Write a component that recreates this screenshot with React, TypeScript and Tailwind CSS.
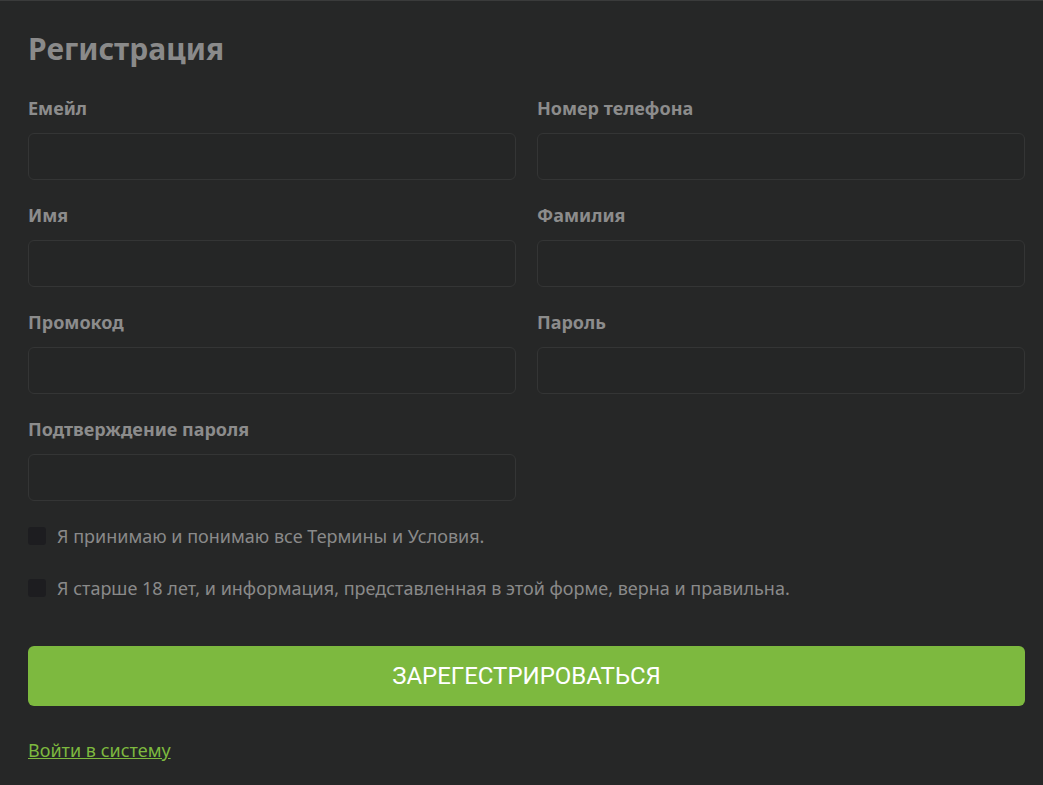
import React from "react";

function Field({ label }: { label: string }) {
  return (
    <div className="flex flex-col">
      <label className="text-[18px] font-bold leading-[22px] text-[#8c8c8c] mb-[14px]">{label}</label>
      <input className="h-[47px] w-full rounded-[6px] border border-[#343535] bg-[#252626] outline-none" />
    </div>
  );
}

function Check({ text }: { text: string }) {
  return (
    <label className="flex items-center gap-[11px]">
      <span className="w-[18px] h-[18px] rounded-[3px] bg-[#1d1d20] shrink-0" />
      <span className="text-[18px] leading-[22px] text-[#8a8a8a]">{text}</span>
    </label>
  );
}

export default function App() {
  return (
    <div className="min-h-[785px] w-full bg-[#262727] border-t border-[#3a3b3b] px-[28px] pt-[30px] pb-[24px]" style={{ fontFamily: '"Noto Sans", "Open Sans", sans-serif' }}>
      <h1 className="text-[30px] font-bold leading-[36px] text-[#8a8a8a]">Регистрация</h1>
      <div className="grid grid-cols-2 gap-x-[21px] gap-y-[24px] mt-[30px] w-[997px]">
        <Field label="Емейл" />
        <Field label="Номер телефона" />
        <Field label="Имя" />
        <Field label="Фамилия" />
        <Field label="Промокод" />
        <Field label="Пароль" />
        <Field label="Подтверждение пароля" />
      </div>
      <div className="flex flex-col gap-[30px] mt-[24px]">
        <Check text="Я принимаю и понимаю все Термины и Условия." />
        <Check text="Я старше 18 лет, и информация, представленная в этой форме, верна и правильна." />
      </div>
      <button className="mt-[47px] w-[997px] h-[60px] rounded-[6px] bg-[#7db93f] text-white text-[24px] leading-none" style={{ fontFamily: 'Roboto, "Liberation Sans", sans-serif' }}>
        ЗАРЕГЕСТРИРОВАТЬСЯ
      </button>
      <div className="mt-[33px]">
        <a href="#" className="text-[18px] leading-[22px] text-[#7db93f] underline">Войти в систему</a>
      </div>
    </div>
  );
}
